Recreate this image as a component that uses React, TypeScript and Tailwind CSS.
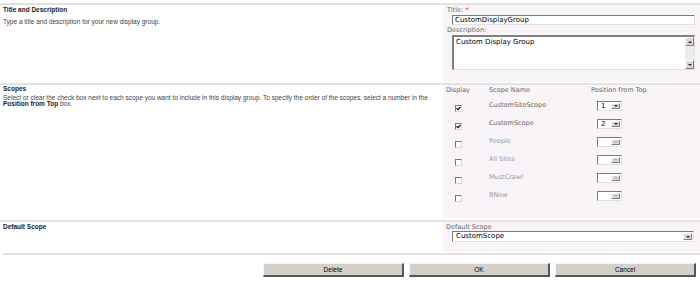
import React from 'react';

interface IScope {
  name: string;
  checked: boolean;
  position?: string;
}

const scopes: IScope[] = [
  { name: 'CustomSiteScope', checked: true, position: '1' },
  { name: 'CustomScope', checked: true, position: '2' },
  { name: 'People', checked: false },
  { name: 'All Sites', checked: false },
  { name: 'MustCrawl', checked: false },
  { name: 'BNew', checked: false },
];

const left = "font-['Liberation_Sans',Arial,sans-serif]";
const right = "font-['DejaVu_Sans',Verdana,sans-serif]";

/* ---------------- Little classic controls ---------------- */
const Arrow: React.FC<{ down?: boolean; disabled?: boolean }> = ({ down = true, disabled }) => (
  <div className="w-[9px] h-full bg-[#dcd9d2] border-t border-l border-t-white border-l-white border-r border-b border-r-[#808080] border-b-[#808080] flex items-center justify-center">
    <svg width="4" height="2" viewBox="0 0 4 2">
      <path d={down ? 'M0 0h4L2 2z' : 'M0 2h4L2 0z'} fill={disabled ? '#b0b0b0' : '#222'} />
    </svg>
  </div>
);

const Select: React.FC<{ value?: string; disabled?: boolean; className?: string }> = ({
  value,
  disabled,
  className = '',
}) => (
  <div
    className={`flex bg-white border-t border-l border-[#7a7a7a] border-r border-b border-r-[#e0e0e0] border-b-[#e0e0e0] p-[1px] ${className}`}
  >
    <div className={`flex-1 pl-[2px] text-[7px] leading-[7px] text-black ${right}`}>{value}</div>
    <Arrow disabled={disabled} />
  </div>
);

const Checkbox: React.FC<{ checked: boolean }> = ({ checked }) => (
  <div className="w-[7px] h-[7px] bg-white border-t border-l border-[#7a7a7a] border-r border-b border-r-[#d8d8d8] border-b-[#d8d8d8] flex items-center justify-center">
    {checked && (
      <svg width="5" height="5" viewBox="0 0 5 5">
        <path d="M0.5 2.2L2 3.7L4.5 0.8" stroke="#000" strokeWidth="1.1" fill="none" />
      </svg>
    )}
  </div>
);

const Button: React.FC<{ label: string }> = ({ label }) => (
  <button
    className={`w-[141px] h-[14px] bg-[#d4d0c8] border-t border-l border-t-[#f4f4f4] border-l-[#f4f4f4] border-r-2 border-b-2 border-r-[#555] border-b-[#555] text-[6.5px] text-black ${left}`}
  >
    {label}
  </button>
);

const App: React.FC = () => {
  return (
    <div className="w-[700px] h-[282px] bg-white overflow-hidden pt-[3px]">
      {/* Title and Description */}
      <div className="grid grid-cols-[443px_1fr] h-[80px] border-t-2 border-[#e2e2e2]">
        <div className={`px-[3px] pt-[1px] ${left}`}>
          <div className="text-[6.5px] leading-[8px] font-bold text-[#222]">Title and Description</div>
          <div className="mt-[4px] text-[6.5px] leading-[8px] text-[#444]">
            Type a title and description for your new display group.
          </div>
        </div>
        <div className={`bg-[#f8f4f8] mb-[1px] pl-[4px] pr-[5px] pt-[1px] ${right}`}>
          <div className="text-[6.5px] leading-[9px] text-[#666]">
            Title: <span className="text-[#e00000]">*</span>
          </div>
          <div className="ml-[5px] h-[10px] bg-white border-t border-l border-[#7a7a7a] border-r border-b border-r-[#e0e0e0] border-b-[#e0e0e0] px-[2px] text-[7px] leading-[8px] text-black">
            CustomDisplayGroup
          </div>
          <div className="mt-[1px] text-[6.5px] leading-[9px] text-[#666]">Description:</div>
          <div className="ml-[5px] h-[35px] bg-white border-t-2 border-l-2 border-[#808080] border-r border-b border-r-[#e0e0e0] border-b-[#e0e0e0] flex">
            <div className="flex-1 px-[2px] pt-[1px] text-[7px] leading-[8px] text-black">Custom Display Group</div>
            <div className="w-[9px] flex flex-col bg-[#ececec]">
              <div className="h-[9px]">
                <Arrow down={false} />
              </div>
              <div className="flex-1" />
              <div className="h-[9px]">
                <Arrow />
              </div>
            </div>
          </div>
        </div>
      </div>

      {/* Scopes */}
      <div className="grid grid-cols-[443px_1fr] h-[137px] border-t-2 border-[#e2e2e2]">
        <div className={`px-[3px] ${left}`}>
          <div className="text-[6.5px] leading-[7px] font-bold text-[#222]">Scopes</div>
          <div className="mt-[3px] text-[6.5px] leading-[6px] text-[#444]">
            Select or clear the check box next to each scope you want to include in this display group. To
            specify the order of the scopes, select a number in the
            <br />
            <span className="font-bold text-[#222]">Position from Top</span> box.
          </div>
        </div>
        <div className={`bg-[#f8f4f8] mb-[1px] pl-[3px] pt-[1px] ${right}`}>
          <div className="flex text-[6.5px] leading-[8px] text-[#666]">
            <div className="w-[43px]">Display</div>
            <div className="w-[102px]">Scope Name</div>
            <div>Position from Top</div>
          </div>
          <div className="mt-[7px] flex flex-col">
            {scopes.map((scope) => (
              <div key={scope.name} className="flex h-[18px]">
                <div className="w-[43px] pl-[9px] pt-[4px]">
                  <Checkbox checked={scope.checked} />
                </div>
                <div
                  className={`w-[108px] text-[6.5px] leading-[8px] ${
                    scope.checked ? 'text-[#666]' : 'text-[#999]'
                  }`}
                >
                  {scope.name}
                </div>
                <Select value={scope.position} disabled={!scope.checked} className="w-[25px] h-[10px]" />
              </div>
            ))}
          </div>
        </div>
      </div>

      {/* Default Scope */}
      <div className="grid grid-cols-[443px_1fr] h-[33px] border-t-2 border-[#e2e2e2]">
        <div className={`px-[3px] pt-[1px] ${left}`}>
          <div className="text-[6.5px] leading-[8px] font-bold text-[#222]">Default Scope</div>
        </div>
        <div className={`bg-[#f8f4f8] mb-[1px] pl-[3px] pr-[6px] pt-[1px] ${right}`}>
          <div className="text-[6.5px] leading-[8px] text-[#666]">Default Scope</div>
          <Select value="CustomScope" className="ml-[6px] h-[11px]" />
        </div>
      </div>

      {/* Buttons */}
      <div className="border-t-2 border-[#e2e2e2] ml-[3px] flex justify-end gap-[5px] pr-[4px] pt-[8px]">
        <Button label="Delete" />
        <Button label="OK" />
        <Button label="Cancel" />
      </div>
    </div>
  );
};

export default App;
